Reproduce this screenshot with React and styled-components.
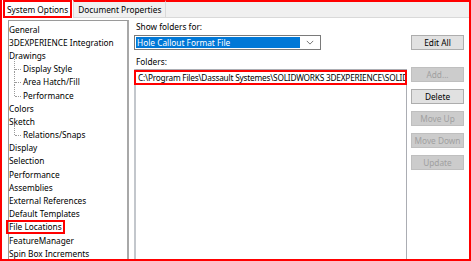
import React from 'react'
import styled, { createGlobalStyle } from 'styled-components'

const GlobalStyle = createGlobalStyle`
  html, body { margin: 0; padding: 0; background: #fff; }
  body { font-family: "Noto Sans", "Open Sans", sans-serif; }
`

const treeItems = [
  { label: 'General' },
  { label: '3DEXPERIENCE Integration' },
  { label: 'Drawings' },
  { label: 'Display Style', child: true },
  { label: 'Area Hatch/Fill', child: true },
  { label: 'Performance', child: true, last: true },
  { label: 'Colors' },
  { label: 'Sketch' },
  { label: 'Relations/Snaps', child: true, last: true },
  { label: 'Display' },
  { label: 'Selection' },
  { label: 'Performance' },
  { label: 'Assemblies' },
  { label: 'External References' },
  { label: 'Default Templates' },
  { label: 'File Locations', marked: true },
  { label: 'FeatureManager' },
  { label: 'Spin Box Increments' },
]

const buttons = [
  { label: 'Edit All', gap: 0 },
  { label: 'Add...', gap: 17, disabled: true },
  { label: 'Delete', gap: 7 },
  { label: 'Move Up', gap: 7, disabled: true },
  { label: 'Move Down', gap: 7, disabled: true },
  { label: 'Update', gap: 7, disabled: true },
]

export default function App() {
  return (
    <>
      <GlobalStyle />
      <Frame>
        <TabStrip>
          <Tab active marked>System Options</Tab>
          <Tab>Document Properties</Tab>
          <TabFill />
        </TabStrip>
        <Body>
          <Tree>
            {treeItems.map((item, i) => (
              <TreeRow key={i} child={item.child}>
                {item.child && <Branch last={item.last} />}
                <TreeLabel marked={item.marked}>{item.label}</TreeLabel>
              </TreeRow>
            ))}
          </Tree>
          <Main>
            <Label>Show folders for:</Label>
            <TopRow>
              <Select>
                <Selected>Hole Callout Format File</Selected>
                <Chevron viewBox="0 0 10 6">
                  <path d="M1 1 L5 5 L9 1" fill="none" stroke="#555" strokeWidth="1" />
                </Chevron>
              </Select>
            </TopRow>
            <Label top={5}>Folders:</Label>
            <FolderList>
              <FolderRow>C:\Program Files\Dassault Systemes\SOLIDWORKS 3DEXPERIENCE\SOLID</FolderRow>
            </FolderList>
          </Main>
          <Side>
            {buttons.map((b) => (
              <Button key={b.label} disabled={b.disabled} gap={b.gap}>{b.label}</Button>
            ))}
          </Side>
        </Body>
      </Frame>
    </>
  )
}

const Frame = styled.div`
  box-sizing: border-box;
  width: 471px;
  height: 261px;
  border: 2px solid #ff0000;
  border-top: none;
  overflow: hidden;
  display: flex;
  flex-direction: column;
  background: #fff;
  font-size: 8.3px;
  color: #000;
`

const TabStrip = styled.div`
  display: flex;
  height: 18px;
  margin-left: -2px;
  margin-right: -2px;
  flex: none;
`

const Tab = styled.div`
  box-sizing: border-box;
  height: 18px;
  display: flex;
  align-items: center;
  padding: 0 ${({ marked }) => (marked ? '2px' : '4px')};
  background: ${({ active }) => (active ? '#fff' : '#f0f0f0')};
  border: ${({ marked }) => (marked ? '2px solid #ff0000' : '1px solid #d9d9d9')};
  border-top: 2px solid #ff0000;
  margin-left: ${({ marked }) => (marked ? '3px' : '1px')};
  white-space: nowrap;
`

const TabFill = styled.div`
  flex: 1;
  background: #f0f0f0;
  border-top: 2px solid #ff0000;
  border-right: 2px solid #ff0000;
  border-bottom: 1px solid #d9d9d9;
`

const Body = styled.div`
  flex: 1;
  display: flex;
  padding: 2px 0 0 6px;
  min-height: 0;
`

const Tree = styled.div`
  box-sizing: border-box;
  width: 121px;
  flex: none;
  border: 1px solid #9a9a9a;
  border-right: 2px solid #a8a8a8;
  border-bottom: none;
  padding: 2px 0 0 0;
`

const TreeRow = styled.div`
  position: relative;
  height: 13.2px;
  display: flex;
  align-items: center;
  padding-left: ${({ child }) => (child ? '14px' : '0')};
  white-space: nowrap;
`

const Branch = styled.span`
  position: absolute;
  left: 5px;
  top: -4px;
  height: ${({ last }) => (last ? '10.6px' : '13.2px')};
  width: 6px;
  border-left: 1px dotted #9a9a9a;
  &::after {
    content: '';
    position: absolute;
    left: 0;
    top: 10.6px;
    width: 6px;
    border-top: 1px dotted #9a9a9a;
  }
`

const TreeLabel = styled.span`
  box-sizing: border-box;
  line-height: 10px;
  padding: ${({ marked }) => (marked ? '0 1px' : '0')};
  margin-left: ${({ marked }) => (marked ? '-3px' : '0')};
  border: ${({ marked }) => (marked ? '2px solid #ff0000' : 'none')};
`

const Main = styled.div`
  margin-left: 5px;
  width: 273px;
  flex: none;
  display: flex;
  flex-direction: column;
`

const Label = styled.div`
  margin-top: ${({ top }) => top || 0}px;
  padding-left: 2px;
  line-height: 13px;
`

const TopRow = styled.div`
  margin-top: 2px;
  display: flex;
`

const Select = styled.div`
  box-sizing: border-box;
  width: 187px;
  height: 15px;
  border: 1px solid #7a7a7a;
  display: flex;
  align-items: center;
  padding: 1px;
`

const Selected = styled.div`
  flex: 1;
  height: 100%;
  background: #0078d7;
  color: #fff;
  display: flex;
  align-items: center;
  padding-left: 1px;
`

const Chevron = styled.svg`
  width: 8px;
  height: 5px;
  margin: 0 5px 0 6px;
`

const FolderList = styled.div`
  box-sizing: border-box;
  flex: 1;
  margin-top: 1px;
  border: 1px solid #abadb3;
  border-left: 2px solid #c3c7cc;
  border-bottom: none;
`

const FolderRow = styled.div`
  box-sizing: border-box;
  height: 15px;
  border: 2px solid #ff0000;
  margin-left: -2px;
  margin-right: -1px;
  padding-left: 2px;
  display: flex;
  align-items: center;
  white-space: nowrap;
  overflow: hidden;
  letter-spacing: -0.22px;
`

const Side = styled.div`
  margin-left: 4px;
  padding-top: 15px;
  display: flex;
  flex-direction: column;
`

const Button = styled.div`
  box-sizing: border-box;
  width: 53px;
  height: 15px;
  margin-top: ${({ gap }) => gap}px;
  display: flex;
  align-items: center;
  justify-content: center;
  background: ${({ disabled }) => (disabled ? '#cccccc' : '#e1e1e1')};
  border: 1px solid ${({ disabled }) => (disabled ? '#bfbfbf' : '#adadad')};
  color: ${({ disabled }) => (disabled ? '#a0a0a0' : '#000')};
  white-space: nowrap;
`
